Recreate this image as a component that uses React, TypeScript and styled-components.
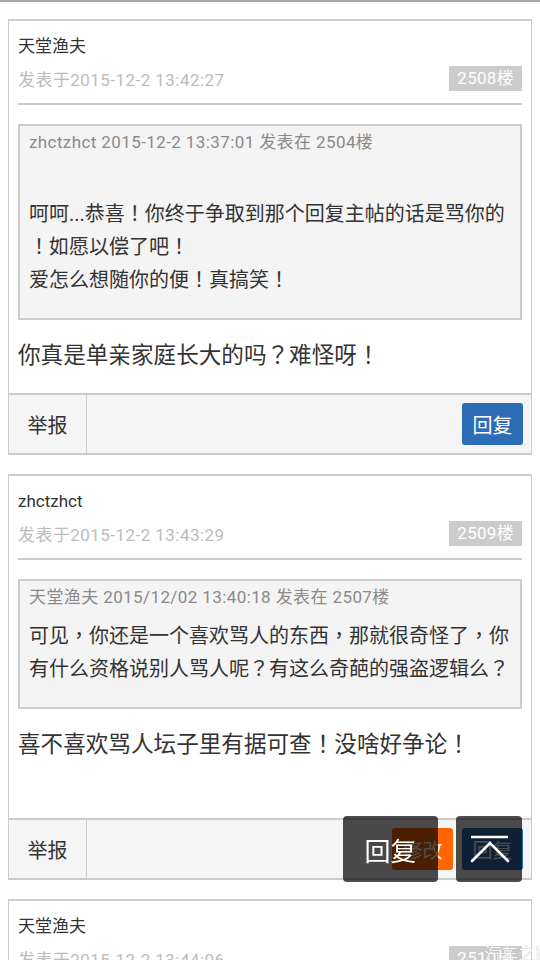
import React from "react";
import styled, { createGlobalStyle } from "styled-components";

const Global = createGlobalStyle`
  html, body {
    margin: 0;
    padding: 0;
    background: #ffffff;
    overflow: hidden;
  }
  body {
    font-family: Roboto, "Noto Sans CJK TC", "Noto Sans CJK SC", sans-serif;
    color: #333;
  }
`;

const Page = styled.div`
  display: flex;
  flex-direction: column;
  padding-bottom: 40px;
`;

const PrevEdge = styled.div`
  height: 2px;
  background: #a8a8a8;
  box-shadow: 0 2px 8px rgba(0, 0, 0, 0.08);
`;

const Card = styled.article`
  margin: 17px 8px 2px;
  background: #fff;
  border: 1px solid #cccccc;
  border-top-width: 2px;
  border-bottom-width: 2px;
  & + & {
    margin-top: 17px;
  }
`;

const Body = styled.div`
  padding: 10px 9px 19px;
`;

const Author = styled.div`
  font-size: 17px;
  line-height: 30px;
  color: #333;
`;

const MetaRow = styled.div`
  margin-top: 5px;
  display: flex;
  align-items: center;
  justify-content: space-between;
  height: 25px;
`;

const PostTime = styled.span`
  font-size: 17px;
  letter-spacing: 0.45px;
  color: #bcbcbc;
`;

const Floor = styled.span`
  background: #cccccc;
  color: #fff;
  font-size: 17px;
  letter-spacing: 0.3px;
  line-height: 25px;
  height: 25px;
  padding: 0 8px;
`;

const Divider = styled.div`
  margin-top: 12px;
  height: 2px;
  background: #cccccc;
`;

const Quote = styled.blockquote`
  margin: 19px 0 0;
  background: #f4f4f4;
  border: 2px solid #cccccc;
  padding: 5px 9px 21px;
`;

const QuoteHead = styled.div`
  font-size: 17px;
  letter-spacing: 0.4px;
  line-height: 22px;
  color: #8a8a8a;
  white-space: nowrap;
`;

const QuoteText = styled.div`
  margin-top: 12px;
  font-size: 20px;
  line-height: 33px;
  color: #333;
  white-space: nowrap;
`;

const Content = styled.div`
  margin-top: 18px;
  font-size: 22.6px;
  line-height: 36px;
  color: #333;
  white-space: nowrap;
`;

const Footer = styled.div`
  display: flex;
  align-items: center;
  height: 58px;
  background: #f5f5f5;
  border-top: 2px solid #cccccc;
`;

const ReportBtn = styled.button`
  all: unset;
  width: 77px;
  height: 100%;
  display: flex;
  align-items: center;
  justify-content: center;
  border-right: 1px solid #cccccc;
  font-size: 20px;
  color: #333;
  font-family: Roboto, "Noto Sans CJK TC", "Noto Sans CJK SC", sans-serif;
`;

const Actions = styled.div`
  margin-left: auto;
  padding-right: 8px;
  display: flex;
  gap: 9px;
`;

const ActionBtn = styled.button<{ $tone?: "blue" | "orange" }>`
  all: unset;
  width: 61px;
  height: 42px;
  border-radius: 3px;
  display: flex;
  align-items: center;
  justify-content: center;
  font-size: 20px;
  color: #fff;
  font-family: Roboto, "Noto Sans CJK TC", "Noto Sans CJK SC", sans-serif;
  background: ${(p) => (p.$tone === "orange" ? "#ff6600" : "#2c6db6")};
`;

const FloatBar = styled.div`
  position: fixed;
  right: 18px;
  bottom: 78px;
  display: flex;
  gap: 18px;
`;

const FloatBtn = styled.button<{ $wide?: boolean }>`
  all: unset;
  width: ${(p) => (p.$wide ? "95px" : "66px")};
  height: 66px;
  border-radius: 4px;
  background: rgba(0, 0, 0, 0.7);
  color: #fff;
  display: flex;
  align-items: center;
  justify-content: center;
  font-size: 26px;
  font-family: Roboto, "Noto Sans CJK TC", "Noto Sans CJK SC", sans-serif;
`;

const Watermark = styled.div`
  position: fixed;
  right: -12px;
  bottom: -5px;
  font-size: 17px;
  color: rgba(255, 255, 255, 0.95);
  text-shadow: 0 0 1px rgba(120, 120, 120, 0.7);
`;

type Post = {
  author: string;
  time: string;
  floor: string;
  quoteHead?: string;
  quoteLines?: string[];
  content?: string[];
  editable?: boolean;
};

const BLANK = "\u00a0";

const posts: Post[] = [
  {
    author: "天堂渔夫",
    time: "发表于2015-12-2 13:42:27",
    floor: "2508楼",
    quoteHead: "zhctzhct 2015-12-2 13:37:01 发表在 2504楼",
    quoteLines: [
      BLANK,
      "呵呵...恭喜！你终于争取到那个回复主帖的话是骂你的",
      "！如愿以偿了吧！",
      "爱怎么想随你的便！真搞笑！",
    ],
    content: ["你真是单亲家庭长大的吗？难怪呀！"],
  },
  {
    author: "zhctzhct",
    time: "发表于2015-12-2 13:43:29",
    floor: "2509楼",
    quoteHead: "天堂渔夫 2015/12/02 13:40:18 发表在 2507楼",
    quoteLines: [
      "可见，你还是一个喜欢骂人的东西，那就很奇怪了，你",
      "有什么资格说别人骂人呢？有这么奇葩的强盗逻辑么？",
    ],
    content: ["喜不喜欢骂人坛子里有据可查！没啥好争论！", BLANK],
    editable: true,
  },
  {
    author: "天堂渔夫",
    time: "发表于2015-12-2 13:44:06",
    floor: "2510楼",
    content: ["……"],
  },
];

const Lines = ({ lines }: { lines: string[] }) => (
  <>
    {lines.map((l, i) => (
      <React.Fragment key={i}>
        {l}
        {i < lines.length - 1 && <br />}
      </React.Fragment>
    ))}
  </>
);

const TopIcon = () => (
  <svg width="66" height="66" viewBox="0 0 66 66" fill="none">
    <line x1="15" y1="21" x2="52" y2="21" stroke="#fff" strokeWidth="2.6" />
    <polyline
      points="16,45 34,27 52,45"
      stroke="#fff"
      strokeWidth="2.6"
      strokeLinecap="round"
      strokeLinejoin="miter"
    />
  </svg>
);

export default function App() {
  return (
    <Page>
      <Global />
      <PrevEdge />
      {posts.map((p, i) => (
        <Card key={i}>
          <Body>
            <Author>{p.author}</Author>
            <MetaRow>
              <PostTime>{p.time}</PostTime>
              <Floor>{p.floor}</Floor>
            </MetaRow>
            <Divider />
            {p.quoteHead && (
              <Quote>
                <QuoteHead>{p.quoteHead}</QuoteHead>
                <QuoteText>
                  <Lines lines={p.quoteLines || []} />
                </QuoteText>
              </Quote>
            )}
            {p.content && (
              <Content>
                <Lines lines={p.content} />
              </Content>
            )}
          </Body>
          <Footer>
            <ReportBtn>举报</ReportBtn>
            <Actions>
              {p.editable && <ActionBtn $tone="orange">修改</ActionBtn>}
              <ActionBtn>回复</ActionBtn>
            </Actions>
          </Footer>
        </Card>
      ))}
      <FloatBar>
        <FloatBtn $wide>回复</FloatBtn>
        <FloatBtn aria-label="返回顶部">
          <TopIcon />
        </FloatBtn>
      </FloatBar>
      <Watermark>汽车之家</Watermark>
    </Page>
  );
}
